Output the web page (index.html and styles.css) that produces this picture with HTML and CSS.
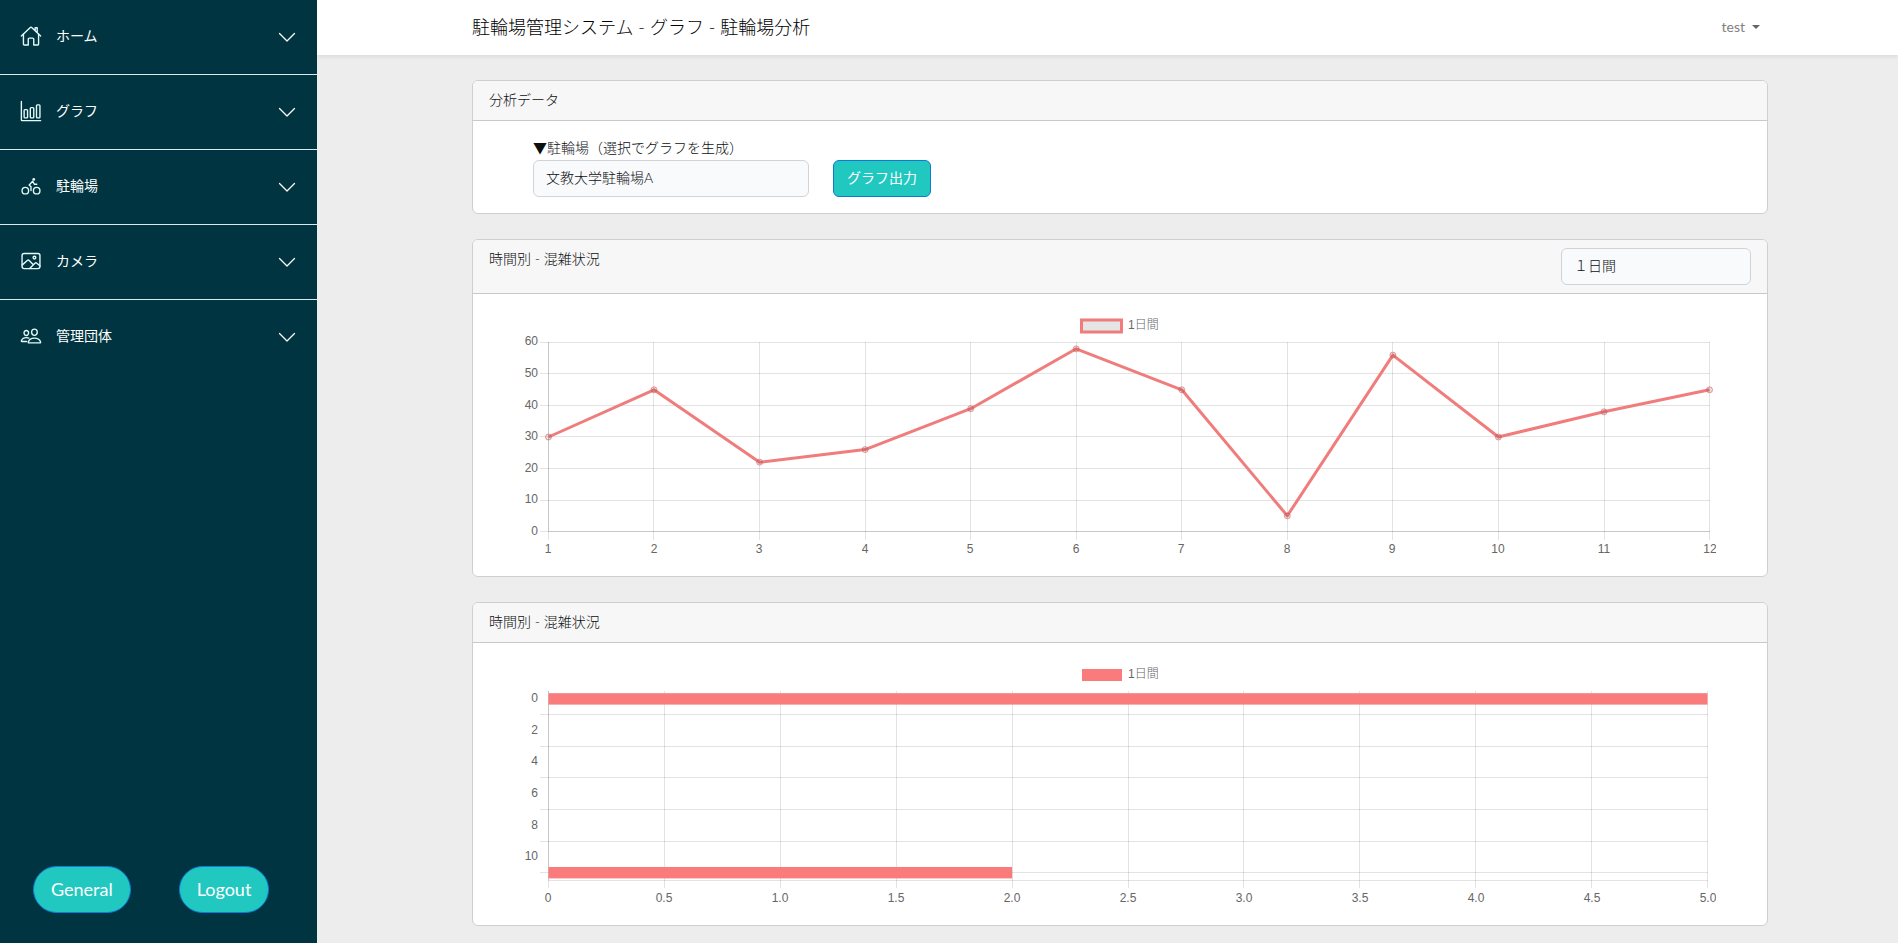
FILE: index.html
```html
<!DOCTYPE html>
<html lang="ja">
<head>
<meta charset="utf-8">
<meta name="viewport" content="width=device-width, initial-scale=1">
<title>駐輪場管理システム</title>
<link rel="stylesheet" href="styles.css">
</head>
<body>
<div class="layout">
  <aside class="sidebar">
    <nav class="menu">
      <a class="menu-item" href="#home">
        <svg class="menu-icon" viewBox="0 0 512 512" aria-hidden="true"><path d="M80 212v236a16 16 0 0016 16h96V328a24 24 0 0124-24h80a24 24 0 0124 24v136h96a16 16 0 0016-16V212"/><path d="M480 256L266.89 52c-5-5.28-16.69-5.34-21.78 0L32 256M400 179V64h-48v69"/></svg>
        <span class="menu-label">ホーム</span>
        <svg class="chevron" viewBox="0 0 16 16" aria-hidden="true"><path d="M2 6l6 6 6-6"/></svg>
      </a>
      <a class="menu-item" href="#graph">
        <svg class="menu-icon" viewBox="0 0 512 512" aria-hidden="true"><path d="M32 32v432a16 16 0 0016 16h432"/><rect x="96" y="224" width="80" height="192" rx="20"/><rect x="240" y="176" width="80" height="240" rx="20"/><rect x="384" y="112" width="80" height="304" rx="20"/></svg>
        <span class="menu-label">グラフ</span>
        <svg class="chevron" viewBox="0 0 16 16" aria-hidden="true"><path d="M2 6l6 6 6-6"/></svg>
      </a>
      <a class="menu-item" href="#parking">
        <svg class="menu-icon" viewBox="0 0 512 512" aria-hidden="true"><circle cx="388" cy="364" r="76"/><circle cx="124" cy="364" r="76"/><path d="M256 360v-86l-42-42 80-88 40 72h56"/><circle class="solid" cx="320" cy="104" r="32"/></svg>
        <span class="menu-label">駐輪場</span>
        <svg class="chevron" viewBox="0 0 16 16" aria-hidden="true"><path d="M2 6l6 6 6-6"/></svg>
      </a>
      <a class="menu-item" href="#camera">
        <svg class="menu-icon" viewBox="0 0 512 512" aria-hidden="true"><rect x="48" y="80" width="416" height="352" rx="48"/><circle cx="336" cy="176" r="32"/><path d="M304 335.79l-90.66-90.49a32 32 0 00-43.87-1.3L48 352M224 432l123.34-123.34a32 32 0 0143.11-2L464 368"/></svg>
        <span class="menu-label">カメラ</span>
        <svg class="chevron" viewBox="0 0 16 16" aria-hidden="true"><path d="M2 6l6 6 6-6"/></svg>
      </a>
      <a class="menu-item" href="#organization">
        <svg class="menu-icon" viewBox="0 0 512 512" aria-hidden="true"><path d="M402 168c-2.93 40.67-33.1 72-66 72s-63.12-31.32-66-72c-3-42.31 26.37-72 66-72s69 30.46 66 72z"/><path d="M336 304c-65.17 0-127.84 32.37-143.54 95.41-2.08 8.34 3.15 16.59 11.72 16.59h263.65c8.57 0 13.77-8.25 11.72-16.59C463.85 335.36 401.18 304 336 304z"/><path d="M200 185.94c-2.34 32.48-26.72 58.06-53 58.06s-50.7-25.57-53-58.06C91.61 152.15 115.34 128 147 128s55.39 24.77 53 57.94zM206 306c-18.05-8.27-37.93-11.45-59-11.45-52 0-102.1 25.85-114.65 76.2-1.65 6.66 2.53 13.25 9.37 13.25H154"/></svg>
        <span class="menu-label">管理団体</span>
        <svg class="chevron" viewBox="0 0 16 16" aria-hidden="true"><path d="M2 6l6 6 6-6"/></svg>
      </a>
    </nav>
    <div class="sidebar-actions">
      <button class="pill" type="button">General</button>
      <button class="pill" type="button">Logout</button>
    </div>
  </aside>

  <div class="page">
    <header class="topbar">
      <div class="container topbar-row">
        <h1 class="page-title">駐輪場管理システム - グラフ - 駐輪場分析</h1>
        <button class="user-menu" type="button">test<span class="caret"></span></button>
      </div>
    </header>

    <main class="container content">
      <section class="card">
        <div class="card-header"><h2 class="card-title">分析データ</h2></div>
        <form class="filter">
          <div class="field">
            <label class="field-label" for="parking">▼駐輪場（選択でグラフを生成）</label>
            <select class="select" id="parking"><option>文教大学駐輪場A</option></select>
          </div>
          <button class="submit" type="button">グラフ出力</button>
        </form>
      </section>

      <section class="card">
        <div class="card-header">
          <h2 class="card-title">時間別 - 混雑状況</h2>
          <select class="select select-period" aria-label="期間"><option>１日間</option></select>
        </div>
        <div class="chart-body">
          <svg class="chart" viewBox="0 0 1192 250" role="img" aria-label="時間別 混雑状況 折れ線グラフ">
            <path class="grid" d="M16 32.5H1186M16 63.5H1186M16 95.5H1186M16 126.5H1186M16 158.5H1186M16 190.5H1186M16 221.5H1186"/>
            <path class="grid" d="M24.5 32V230M129.5 32V230M235.5 32V230M341.5 32V230M446.5 32V230M552.5 32V230M657.5 32V230M763.5 32V230M868.5 32V230M974.5 32V230M1080.5 32V230M1185.5 32V230"/>
            <path class="axis" d="M24.5 32V221.5H1186"/>
            <polyline class="series" points="24.5,127 130,79.8 235.6,152.2 341.1,139.6 446.7,98.7 552.2,38.8 657.8,79.8 763.3,205.8 868.9,45.1 974.4,127 1080,101.8 1185.5,79.8"/>
            <g class="points">
              <circle cx="24.5" cy="127" r="3"/><circle cx="130" cy="79.8" r="3"/><circle cx="235.6" cy="152.2" r="3"/><circle cx="341.1" cy="139.6" r="3"/><circle cx="446.7" cy="98.7" r="3"/><circle cx="552.2" cy="38.8" r="3"/><circle cx="657.8" cy="79.8" r="3"/><circle cx="763.3" cy="205.8" r="3"/><circle cx="868.9" cy="45.1" r="3"/><circle cx="974.4" cy="127" r="3"/><circle cx="1080" cy="101.8" r="3"/><circle cx="1185.5" cy="79.8" r="3"/>
            </g>
            <rect class="legend-outline" x="557.5" y="10" width="40" height="12"/>
            <text x="604" y="19">1日間</text>
            <g class="ticks-y">
              <text x="14" y="35">60</text><text x="14" y="67">50</text><text x="14" y="99">40</text><text x="14" y="130">30</text><text x="14" y="162">20</text><text x="14" y="193">10</text><text x="14" y="225">0</text>
            </g>
            <g class="ticks-x">
              <text x="24" y="243">1</text><text x="130" y="243">2</text><text x="235" y="243">3</text><text x="341" y="243">4</text><text x="446" y="243">5</text><text x="552" y="243">6</text><text x="657" y="243">7</text><text x="763" y="243">8</text><text x="868" y="243">9</text><text x="974" y="243">10</text><text x="1080" y="243">11</text><text x="1186" y="243">12</text>
            </g>
          </svg>
        </div>
      </section>

      <section class="card">
        <div class="card-header"><h2 class="card-title">時間別 - 混雑状況</h2></div>
        <div class="chart-body">
          <svg class="chart" viewBox="0 0 1192 250" role="img" aria-label="時間別 混雑状況 棒グラフ">
            <path class="grid" d="M16 55.5H1184M16 87.5H1184M16 118.5H1184M16 150.5H1184M16 182.5H1184M16 213.5H1184M24 221.5H1184"/>
            <path class="grid" d="M24.5 32V229M140.5 32V229M256.5 32V229M372.5 32V229M488.5 32V229M604.5 32V229M719.5 32V229M835.5 32V229M951.5 32V229M1067.5 32V229M1183.5 32V229"/>
            <path class="axis" d="M24.5 32V221"/>
            <rect class="bar" x="24.5" y="34.2" width="1159" height="11.4"/>
            <rect class="bar" x="24.5" y="208" width="463.6" height="11.4"/>
            <rect class="bar" x="558" y="10" width="40" height="12"/>
            <text x="604" y="19">1日間</text>
            <g class="ticks-y">
              <text x="14" y="43">0</text><text x="14" y="75">2</text><text x="14" y="106">4</text><text x="14" y="138">6</text><text x="14" y="170">8</text><text x="14" y="201">10</text>
            </g>
            <g class="ticks-x">
              <text x="24" y="243">0</text><text x="140" y="243">0.5</text><text x="256" y="243">1.0</text><text x="372" y="243">1.5</text><text x="488" y="243">2.0</text><text x="604" y="243">2.5</text><text x="720" y="243">3.0</text><text x="836" y="243">3.5</text><text x="952" y="243">4.0</text><text x="1068" y="243">4.5</text><text x="1184" y="243">5.0</text>
            </g>
          </svg>
        </div>
      </section>
    </main>
  </div>
</div>
</body>
</html>
```

FILE: styles.css
```css
*,
*::before,
*::after {
  box-sizing: border-box;
}

body {
  margin: 0;
  background: #ededed;
  color: #0c0f12;
  font-family: Lato, "Noto Sans CJK JP", sans-serif;
  font-size: 14px;
  font-weight: 300;
  line-height: 23px;
}

button,
select {
  font: inherit;
}

.layout {
  display: grid;
  grid-template-columns: 317px minmax(0, 1fr);
  min-height: 100vh;
}

/* Sidebar */
.sidebar {
  position: sticky;
  top: 0;
  display: flex;
  flex-direction: column;
  justify-content: space-between;
  height: 100vh;
  background: #003440;
  color: #fff;
}

.menu {
  display: flex;
  flex-direction: column;
}

.menu-item {
  display: flex;
  align-items: center;
  gap: 14px;
  height: 75px;
  padding: 0 20px 3px;
  border-bottom: 1px solid #d9e8ea;
  color: inherit;
  font-weight: 400;
  text-decoration: none;
}

.menu-item:last-child {
  border-bottom-color: transparent;
}

.menu-icon {
  width: 22px;
  height: 22px;
  fill: none;
  stroke: #e3fbfb;
  stroke-width: 32;
  stroke-linecap: round;
  stroke-linejoin: round;
}

.menu-icon .solid {
  fill: #e3fbfb;
  stroke: none;
}

.menu-label {
  flex: 1;
}

.chevron {
  width: 20px;
  height: 20px;
  fill: none;
  stroke: #fff;
  stroke-linecap: round;
  stroke-linejoin: round;
}

.sidebar-actions {
  display: flex;
  gap: 48px;
  padding: 0 33px 30px;
}

.pill {
  padding: 10px 17px;
  border: 1px solid #0d7be0;
  border-radius: 24px;
  background: #20c8c0;
  color: #fff;
  font-size: 18px;
  font-weight: 400;
  line-height: 25px;
}

/* Header */
.container {
  width: 100%;
  max-width: 1320px;
  margin: 0 auto;
  padding: 0 12px;
}

.topbar {
  padding: 7px 0 9px 25px;
  background: #fff;
  box-shadow: 0 2px 4px rgba(0, 0, 0, 0.075);
}

.topbar-row {
  display: flex;
  align-items: center;
  justify-content: space-between;
  min-height: 39px;
}

.page-title {
  margin: 0;
  color: #000;
  font-size: 18px;
  font-weight: 300;
  line-height: 28px;
}

.user-menu {
  display: flex;
  align-items: center;
  gap: 7px;
  padding: 8px;
  border: 0;
  background: none;
  color: #808080;
  font-weight: 400;
}

.caret {
  border-top: 4px solid #666;
  border-right: 4px solid transparent;
  border-left: 4px solid transparent;
}

/* Content */
.page {
  min-width: 0;
}

.content {
  display: flex;
  flex-direction: column;
  gap: 25px;
  max-width: 1345px;
  padding: 25px 12px 16px 37px;
}

.card {
  overflow: hidden;
  border: 1px solid #cfcfcf;
  border-radius: 6px;
  background: #fff;
}

.card-header {
  display: flex;
  align-items: flex-start;
  justify-content: space-between;
  padding: 8px 16px;
  border-bottom: 1px solid #c9c9c9;
  background: #f7f7f7;
}

.card-title {
  margin: 0;
  padding-bottom: 2px;
  font-size: 14px;
  font-weight: 300;
  line-height: 21px;
}

.filter {
  display: flex;
  align-items: flex-end;
  gap: 24px;
  padding: 16px 60px;
}

.field {
  display: flex;
  flex-direction: column;
  width: 276px;
}

.field-label {
  padding-bottom: 2px;
  line-height: 21px;
}

.select {
  width: 100%;
  height: 37px;
  padding: 0 12px 2px;
  border: 1px solid #ced4da;
  border-radius: 6px;
  background: #f8fafc;
  color: #0c0f12;
  appearance: none;
}

.select-period {
  width: 190px;
}

.submit {
  width: 98px;
  height: 37px;
  padding: 0 0 2px;
  border: 1px solid #0d7bd0;
  border-radius: 6px;
  background: #20c8c0;
  color: #fff;
  font-weight: 400;
}

/* Charts */
.chart-body {
  padding: 16px 51px;
}

.chart {
  display: block;
  width: 100%;
  height: auto;
  fill: #666;
  font-family: "Liberation Sans", "Noto Sans CJK JP", sans-serif;
  font-size: 12px;
  font-weight: 300;
}

.grid {
  fill: none;
  stroke: rgba(0, 0, 0, 0.11);
}

.axis {
  fill: none;
  stroke: rgba(0, 0, 0, 0.12);
}

.series {
  fill: none;
  stroke: #f07c7c;
  stroke-width: 3;
  stroke-linejoin: round;
}

.points {
  fill: rgba(0, 0, 0, 0.1);
  stroke: rgba(225, 90, 90, 0.6);
}

.legend-outline {
  fill: #e5e5e5;
  stroke: #f07c7c;
  stroke-width: 3;
}

.bar {
  fill: #fa7b7b;
}

.ticks-y {
  text-anchor: end;
}

.ticks-x {
  text-anchor: middle;
}
```
